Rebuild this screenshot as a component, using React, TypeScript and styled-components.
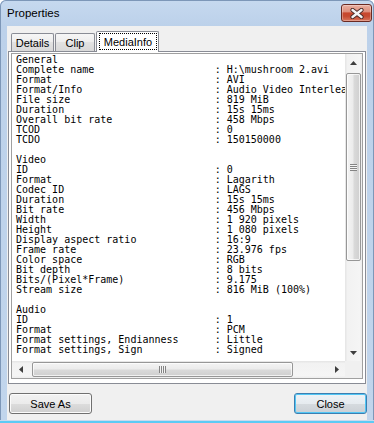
import styled, { createGlobalStyle } from "styled-components";

const GlobalStyle = createGlobalStyle`
  html, body { margin: 0; padding: 0; background: #ffffff; }
  #root { width: 374px; height: 423px; }
`;

const UI_FONT = `"Liberation Sans", Arial, sans-serif`;

type Row = [string, string];
type Section = { title: string; rows: Row[] };

const sections: Section[] = [
  {
    title: "General",
    rows: [
      ["Complete name", "H:\\mushroom 2.avi"],
      ["Format", "AVI"],
      ["Format/Info", "Audio Video Interleave"],
      ["File size", "819 MiB"],
      ["Duration", "15s 15ms"],
      ["Overall bit rate", "458 Mbps"],
      ["TCOD", "0"],
      ["TCDO", "150150000"],
    ],
  },
  {
    title: "Video",
    rows: [
      ["ID", "0"],
      ["Format", "Lagarith"],
      ["Codec ID", "LAGS"],
      ["Duration", "15s 15ms"],
      ["Bit rate", "456 Mbps"],
      ["Width", "1 920 pixels"],
      ["Height", "1 080 pixels"],
      ["Display aspect ratio", "16:9"],
      ["Frame rate", "23.976 fps"],
      ["Color space", "RGB"],
      ["Bit depth", "8 bits"],
      ["Bits/(Pixel*Frame)", "9.175"],
      ["Stream size", "816 MiB (100%)"],
    ],
  },
  {
    title: "Audio",
    rows: [
      ["ID", "1"],
      ["Format", "PCM"],
      ["Format settings, Endianness", "Little"],
      ["Format settings, Sign", "Signed"],
    ],
  },
];

const Window = styled.div`
  width: 374px;
  height: 423px;
  display: flex;
  flex-direction: column;
  background: linear-gradient(#c6d9ef, #bcd1ea 26px, #c1d5ec);
  border-radius: 6px 6px 0 0;
  box-shadow: inset 0 0 0 1px #7d97b8;
  overflow: hidden;
  font-family: ${UI_FONT};
  color: #000;
`;

const TitleBar = styled.div`
  height: 26px;
  flex-shrink: 0;
  display: flex;
  align-items: center;
  justify-content: space-between;
  padding: 0 2px 0 7px;
`;

const Caption = styled.span`
  font-size: 11.5px;
  margin-top: -1px;
`;

const CloseCaption = styled.div`
  align-self: flex-start;
  margin-top: 4px;
  width: 31px;
  height: 18px;
  box-sizing: border-box;
  border: 1px solid #6b2a22;
  border-radius: 3px;
  background: linear-gradient(#eab0a2 0%, #dd8f7d 42%, #c8472d 50%, #c54a31 70%, #d9765d 100%);
  box-shadow: inset 0 0 0 1px rgba(255, 255, 255, 0.3);
  display: flex;
  align-items: center;
  justify-content: center;
`;

const Client = styled.div`
  flex: 1;
  margin: 0 7px;
  background: #f0f0f0;
  display: flex;
  flex-direction: column;
  padding-top: 5px;
`;

const BottomEdge = styled.div`
  height: 3px;
  flex-shrink: 0;
  background: linear-gradient(#c8daee 0, #c8daee 1px, #5ccaf4 1px);
`;

const TabStrip = styled.div`
  height: 20px;
  display: flex;
  align-items: flex-end;
  padding-left: 4px;
`;

const Tab = styled.div<{ $w: number; $active?: boolean; $gap: number }>`
  width: ${(p) => p.$w}px;
  height: ${(p) => (p.$active ? 21 : 18)}px;
  margin-left: ${(p) => p.$gap}px;
  margin-bottom: ${(p) => (p.$active ? -1 : 0)}px;
  position: relative;
  z-index: ${(p) => (p.$active ? 1 : 0)};
  box-sizing: border-box;
  border: 1px solid #898c95;
  border-bottom: none;
  border-radius: 2px 2px 0 0;
  background: ${(p) =>
    p.$active
      ? "#ffffff"
      : "linear-gradient(#f6f6f6 0%, #eeeeee 45%, #e2e2e2 50%, #d9d9d9 100%)"};
  font-size: 11px;
  display: flex;
  align-items: center;
  justify-content: center;
  padding: ${(p) => (p.$active ? "1px 1px 2px 2px" : "1px 0 0 0")};
`;

const FocusLabel = styled.span`
  flex: 1;
  align-self: stretch;
  display: flex;
  align-items: center;
  justify-content: center;
  outline: 1px dotted #000;
  outline-offset: -1px;
`;

const Panel = styled.div`
  height: 333px;
  margin: 0 1px;
  box-sizing: border-box;
  border: 1px solid #898c95;
  background: #ffffff;
  padding: 1px 2px 4px 2px;
  display: flex;
`;

const TextBox = styled.div`
  flex: 1;
  border: 1px solid #a0a0a0;
  display: grid;
  grid-template-columns: 1fr 17px;
  grid-template-rows: 1fr 17px;
  background: #ffffff;
  overflow: hidden;
`;

const Content = styled.div`
  overflow: hidden;
  padding: 1px 0 0 4px;
  font-family: "DejaVu Sans Mono", "Liberation Mono", monospace;
  font-size: 10px;
  line-height: 10px;
`;

const Line = styled.div`
  height: 10px;
  white-space: pre;
`;

const VScroll = styled.div`
  display: flex;
  flex-direction: column;
  background: linear-gradient(to right, #e4e4e4, #f2f2f2 15%, #f5f5f5 85%, #ededed);
`;

const HScroll = styled.div`
  display: flex;
  background: linear-gradient(#e4e4e4, #f2f2f2 15%, #f5f5f5 85%, #ededed);
`;

const ArrowBtn = styled.div`
  width: 17px;
  height: 17px;
  flex-shrink: 0;
  display: flex;
  align-items: center;
  justify-content: center;
`;

const VTrack = styled.div`
  flex: 1;
  padding: 2px 1px 0;
`;

const HTrack = styled.div`
  flex: 1;
  display: flex;
  padding: 1px 0 1px 3px;
`;

const Thumb = styled.div<{ $vertical?: boolean; $size: number }>`
  ${(p) => (p.$vertical ? `height: ${p.$size}px;` : `width: ${p.$size}px;`)}
  box-sizing: border-box;
  border: 1px solid #979797;
  border-radius: 2px;
  background: ${(p) =>
    p.$vertical
      ? "linear-gradient(to right, #f4f4f4, #ebebeb 48%, #dadada 52%, #cfcfcf)"
      : "linear-gradient(#f4f4f4, #ebebeb 48%, #dadada 52%, #cfcfcf)"};
  box-shadow: inset 0 0 0 1px rgba(255, 255, 255, 0.7);
  display: flex;
  align-items: center;
  justify-content: center;
`;

const Grip = styled.div<{ $vertical?: boolean }>`
  width: ${(p) => (p.$vertical ? 7 : 7)}px;
  height: ${(p) => (p.$vertical ? 7 : 7)}px;
  background: ${(p) =>
    p.$vertical
      ? "repeating-linear-gradient(to bottom, #848484 0 1px, #f4f4f4 1px 2px)"
      : "repeating-linear-gradient(to right, #848484 0 1px, #f4f4f4 1px 2px)"};
`;

const Corner = styled.div`
  background: #f0f0f0;
`;

const ButtonRow = styled.div`
  display: flex;
  justify-content: space-between;
  margin-top: 9px;
  padding-left: 2px;
`;

const Button = styled.div<{ $w: number; $default?: boolean }>`
  width: ${(p) => p.$w}px;
  height: 21px;
  box-sizing: border-box;
  border: 1px solid ${(p) => (p.$default ? "#3c7fb1" : "#707070")};
  border-radius: 3px;
  background: ${(p) =>
    p.$default
      ? "linear-gradient(#eef3f7 0%, #e6ebef 50%, #d6dbdf 50%, #cbd0d5 100%)"
      : "linear-gradient(#f2f2f2 0%, #ebebeb 50%, #dddddd 50%, #cfcfcf 100%)"};
  box-shadow: inset 0 0 0 1px ${(p) => (p.$default ? "#52c6f4" : "#fbfbfb")};
  font-size: 11px;
  display: flex;
  align-items: center;
  justify-content: center;
`;

const Arrow = ({ dir }: { dir: "up" | "down" | "left" | "right" }) => {
  const pts = {
    up: "0,4 3.5,0 7,4",
    down: "0,0 3.5,4 7,0",
    left: "4,0 0,3.5 4,7",
    right: "0,0 4,3.5 0,7",
  }[dir];
  const vertical = dir === "up" || dir === "down";
  return (
    <svg width={vertical ? 7 : 4} height={vertical ? 4 : 7} viewBox={vertical ? "0 0 7 4" : "0 0 4 7"}>
      <polygon points={pts} fill="#3e3e3e" />
    </svg>
  );
};

export default function App() {
  const lines: string[] = [];
  sections.forEach((s, i) => {
    lines.push(s.title);
    s.rows.forEach(([k, v]) => lines.push(`${k.padEnd(33)}: ${v}`));
    if (i < sections.length - 1) lines.push("");
  });

  return (
    <>
      <GlobalStyle />
      <Window>
        <TitleBar>
          <Caption>Properties</Caption>
          <CloseCaption>
            <svg width="14" height="11" viewBox="0 0 14 11">
              <path d="M2.5 2 L11.5 9 M11.5 2 L2.5 9" stroke="#4a2a28" strokeWidth="4.2" strokeLinecap="round" />
              <path d="M2.5 2 L11.5 9 M11.5 2 L2.5 9" stroke="#f4f4f4" strokeWidth="2.4" strokeLinecap="round" />
            </svg>
          </CloseCaption>
        </TitleBar>
        <Client>
          <TabStrip>
            <Tab $w={43} $gap={0}>Details</Tab>
            <Tab $w={40} $gap={1}>Clip</Tab>
            <Tab $w={63} $gap={1} $active>
              <FocusLabel>MediaInfo</FocusLabel>
            </Tab>
          </TabStrip>
          <Panel>
            <TextBox>
              <Content>
                {lines.map((l, i) => (
                  <Line key={i}>{l}</Line>
                ))}
              </Content>
              <VScroll>
                <ArrowBtn>
                  <Arrow dir="up" />
                </ArrowBtn>
                <VTrack>
                  <Thumb $vertical $size={188}>
                    <Grip $vertical />
                  </Thumb>
                </VTrack>
                <ArrowBtn>
                  <Arrow dir="down" />
                </ArrowBtn>
              </VScroll>
              <HScroll>
                <ArrowBtn>
                  <Arrow dir="left" />
                </ArrowBtn>
                <HTrack>
                  <Thumb $size={261}>
                    <Grip />
                  </Thumb>
                </HTrack>
                <ArrowBtn>
                  <Arrow dir="right" />
                </ArrowBtn>
              </HScroll>
              <Corner />
            </TextBox>
          </Panel>
          <ButtonRow>
            <Button $w={83}>Save As</Button>
            <Button $w={73} $default>
              Close
            </Button>
          </ButtonRow>
        </Client>
        <BottomEdge />
      </Window>
    </>
  );
}
